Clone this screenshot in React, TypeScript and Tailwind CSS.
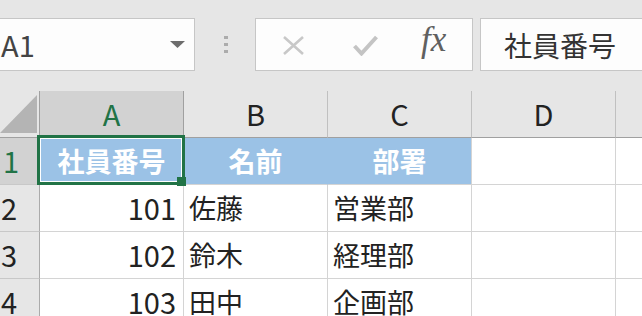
import React from "react";

const font = { fontFamily: '"Noto Sans CJK JP", "Noto Sans", sans-serif' };

function Cell({
  children,
  className = "",
}: {
  children?: React.ReactNode;
  className?: string;
}) {
  return (
    <div className={`h-[47px] border-r border-b border-[#d4d4d4] flex items-center ${className}`}>
      {children}
    </div>
  );
}

export default function App() {
  const rows = [
    { n: "2", id: "101", name: "佐藤", dept: "営業部" },
    { n: "3", id: "102", name: "鈴木", dept: "経理部" },
    { n: "4", id: "103", name: "田中", dept: "企画部" },
  ];
  return (
    <div className="w-[642px] h-[316px] overflow-hidden bg-[#e6e6e6] text-[#222]" style={font}>
      {/* formula bar */}
      <div className="flex pt-[18px] h-[71px]">
        <div className="w-[195px] h-[53px] bg-[#fdfdfd] border-y border-r border-[#c6c6c6] flex items-center justify-between pr-[9px]">
          <span className="text-[29px] leading-none text-[#444] pl-[1px]">A1</span>
          <svg width="15" height="7" viewBox="0 0 15 7">
            <polygon points="0,0 15,0 7.5,7" fill="#6d6d6d" />
          </svg>
        </div>
        <div className="w-[60px] flex flex-col items-center justify-center gap-[4px] pl-[1px]">
          <div className="w-[4px] h-[3px] bg-[#acacac]" />
          <div className="w-[4px] h-[3px] bg-[#acacac]" />
          <div className="w-[4px] h-[3px] bg-[#acacac]" />
        </div>
        <div className="w-[218px] h-[53px] bg-[#fdfdfd] border border-[#c6c6c6] relative">
          <svg className="absolute left-[27px] top-[17px]" width="21" height="19" viewBox="0 0 21 19">
            <path d="M1 1 L20 18 M20 1 L1 18" stroke="#c8c8c8" strokeWidth="2.6" fill="none" />
          </svg>
          <svg className="absolute left-[97px] top-[16px]" width="25" height="21" viewBox="0 0 25 21">
            <path d="M1.5 11 L8.5 18.5 L23.5 2" stroke="#c4c4c4" strokeWidth="4" fill="none" strokeLinejoin="miter" />
          </svg>
          <span
            className="absolute left-[165px] top-[3px] text-[35px] leading-none italic text-[#606060]"
            style={{ fontFamily: '"Liberation Serif", "DejaVu Serif", serif' }}
          >
            fx
          </span>
        </div>
        <div className="w-[7px]" />
        <div className="flex-1 h-[53px] bg-[#fdfdfd] border-y border-l border-[#c6c6c6] flex items-center pl-[23px]">
          <span className="text-[28px] leading-none text-[#333]">社員番号</span>
        </div>
      </div>
      <div className="h-[20px]" />
      {/* grid */}
      <div className="grid grid-cols-[40px_144px_144px_144px_144px_1fr]">
        {/* header row */}
        <div className="h-[47px] border-r border-b border-[#a0a0a0] bg-[#e6e6e6] relative overflow-hidden">
          <div className="absolute left-0 top-[4px] w-[37px] h-[38px] bg-[#b4b4b4] [clip-path:polygon(100%_0,100%_100%,0_100%)]" />
        </div>
        <div className="h-[47px] border-r border-b border-[#a0a0a0] bg-[#d2d2d2] flex items-center justify-center text-[29px] text-[#217346]">A</div>
        <div className="h-[47px] border-r border-b border-[#a0a0a0] border-r-[#c0c0c0] flex items-center justify-center text-[29px]">B</div>
        <div className="h-[47px] border-r border-b border-[#a0a0a0] border-r-[#c0c0c0] flex items-center justify-center text-[29px]">C</div>
        <div className="h-[47px] border-r border-b border-[#a0a0a0] border-r-[#c0c0c0] flex items-center justify-center text-[29px]">D</div>
        <div className="h-[47px] border-b border-[#a0a0a0]" />

        {/* row 1 */}
        <div className="h-[47px] border-r border-b border-[#ababab] border-b-[#c8c8c8] bg-[#d2d2d2] flex items-center pl-[3px] text-[29px] text-[#217346]">1</div>
        <div className="h-[47px] border-r border-b border-[#9bc2e6] bg-[#9bc2e6] relative flex items-center justify-center text-[27px] font-bold text-white">
          社員番号
          <div className="absolute left-[-3px] top-[-3px] right-[-2px] bottom-[-1px] border-[3px] border-solid border-[#217346] shadow-[inset_0_0_0_1px_#ffffff] z-10">
            <div className="absolute right-[-4px] bottom-[-4px] w-[9px] h-[9px] bg-[#217346]" />
          </div>
        </div>
        <Cell className="bg-[#9bc2e6] border-r-[#9bc2e6] justify-center text-[27px] font-bold text-white">名前</Cell>
        <Cell className="bg-[#9bc2e6] justify-center text-[27px] font-bold text-white">部署</Cell>
        <Cell className="bg-white" />
        <div className="h-[47px] border-b border-[#d4d4d4] bg-white" />

        {rows.map((r) => (
          <React.Fragment key={r.n}>
            <div className="h-[47px] border-r border-b border-[#ababab] border-b-[#c8c8c8] bg-[#e6e6e6] flex items-center pl-[1px] text-[29px]">
              {r.n}
            </div>
            <Cell className="bg-white justify-end pr-[7px] text-[29px]">{r.id}</Cell>
            <Cell className="bg-white pl-[5px] text-[27px]">{r.name}</Cell>
            <Cell className="bg-white pl-[5px] text-[27px]">{r.dept}</Cell>
            <Cell className="bg-white" />
            <div className="h-[47px] border-b border-[#d4d4d4] bg-white" />
          </React.Fragment>
        ))}
      </div>
    </div>
  );
}
